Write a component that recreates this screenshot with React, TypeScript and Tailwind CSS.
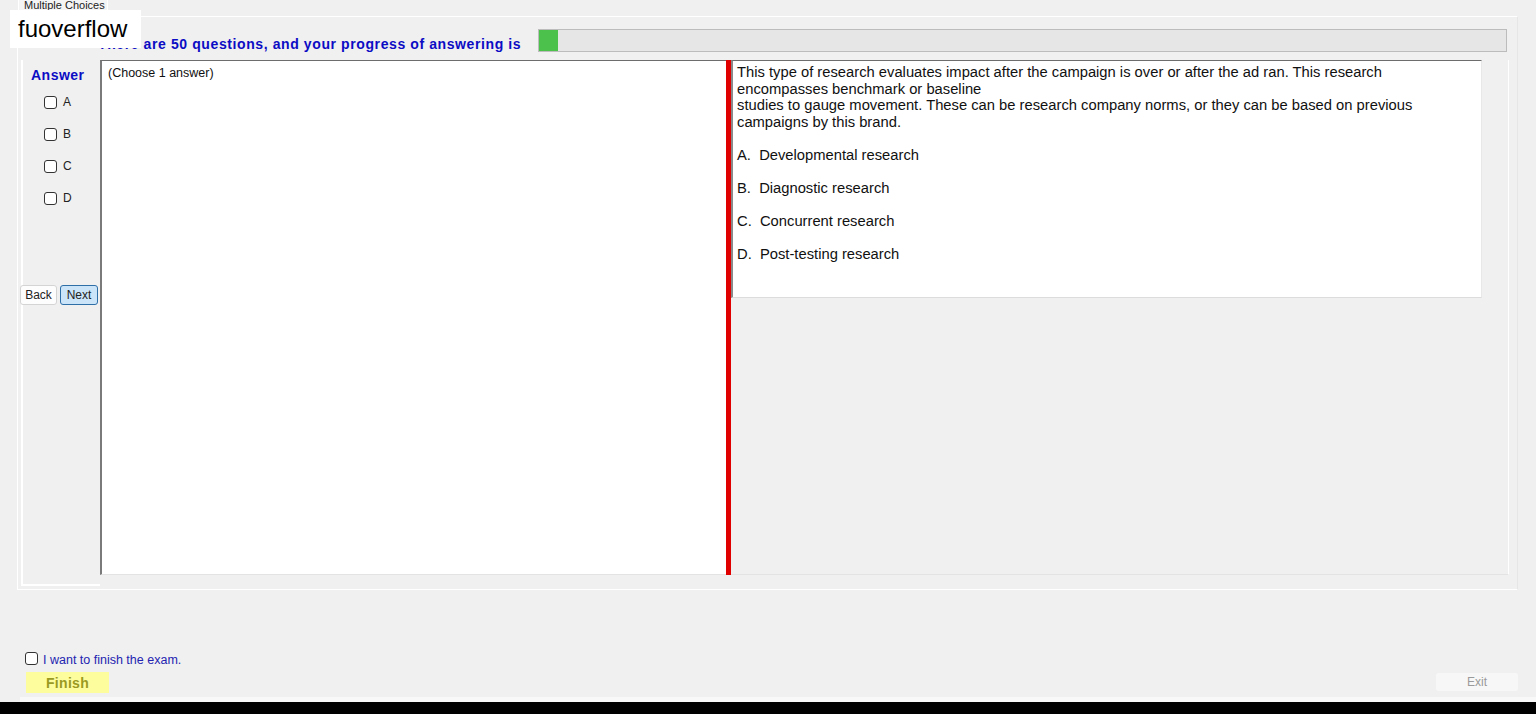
import React from "react";

const Box = () => (
  <div className="w-[13px] h-[13px] bg-white border border-[#333333] rounded-[3px] shrink-0" />
);

export default function App() {
  const choices = ["A", "B", "C", "D"];
  const answers = ["A.  Developmental research", "B.  Diagnostic research", "C.  Concurrent research", "D.  Post-testing research"];
  return (
    <div
      className="relative w-[1536px] h-[714px] overflow-hidden bg-[#f0f0f0] flex flex-col text-black"
      style={{ fontFamily: '"Liberation Sans", Arial, sans-serif' }}
    >
      {/* tab header */}
      <div className="h-[16px] flex pl-[18px] shrink-0">
        <div className="w-[90px] h-[17px] bg-[#f4f4f4] border-x border-white flex items-start pl-[5px] text-[11px] leading-[13px] text-[#222] -mt-[1px]">
          Multiple Choices
        </div>
      </div>

      {/* tab page */}
      <div className="ml-[17px] mr-[18px] h-[574px] shrink-0 border border-white border-r-[#e6e6e6] flex flex-col">
        {/* title row */}
        <div className="mt-[12px] h-[23px] flex shrink-0">
          <div className="w-[520px] pl-[80px] pt-[7px] text-[14px] leading-[16px] font-bold tracking-[0.6px] text-[#0c0cc4] whitespace-nowrap">
            There are 50 questions, and your progress of answering is
          </div>
          <div className="w-[969px] h-[23px] border border-[#bcbcbc] bg-[#e6e6e6] flex">
            <div className="w-[19px] h-full bg-[#4cc24c]" />
          </div>
        </div>

        {/* main row */}
        <div className="mt-[8px] flex h-[526px]">
          {/* left column */}
          <div className="w-[79px] shrink-0 flex flex-col border-l-2 border-b-2 border-white ml-[3px] h-[526px]">
            <div className="pl-[8px] pt-[7px] text-[14px] leading-[16px] font-bold tracking-[0.5px] text-[#0c0cc4]">
              Answer
            </div>
            <div className="mt-[3px] flex flex-col">
              {choices.map((c) => (
                <div key={c} className="h-[32px] flex items-center gap-[6px] pl-[21px]">
                  <Box />
                  <span className="text-[12px] leading-[14px] text-[#222]">{c}</span>
                </div>
              ))}
            </div>
            <div className="mt-[71px] flex gap-[3px] -ml-[3px]">
              <div className="w-[37px] h-[20px] bg-[#fdfdfd] border border-[#d4d4d4] rounded-[3px] flex items-center justify-center text-[12px] text-[#222]">
                Back
              </div>
              <div className="w-[38px] h-[20px] bg-[#cce4f7] border border-[#2f6fa8] rounded-[3px] flex items-center justify-center text-[12px] text-[#222]">
                Next
              </div>
            </div>
          </div>

          {/* left textbox */}
          <div className="w-[626px] h-[515px] shrink-0 bg-white border-t border-t-[#6d6d6d] border-l-2 border-l-[#7a7a7a] border-b border-b-[#e3e3e3]">
            <div className="pl-[6px] pt-[5px] text-[12.5px] leading-[15px] text-[#111]">(Choose 1 answer)</div>
          </div>

          {/* red splitter */}
          <div className="w-[5px] h-[515px] bg-[#e00000] shrink-0" />

          {/* right pane */}
          <div className="w-[778px] h-[515px] shrink-0 flex border-b border-[#e3e3e3] border-r border-r-white">
            <div className="w-[751px] h-[238px] bg-white border-t border-t-[#6d6d6d] border-l-2 border-l-[#8a8a8a] border-b border-b-[#dcdcdc] border-r border-r-[#e8e8e8] pl-[4px] pt-[3px] text-[14.75px] leading-[16.5px] text-[#111] whitespace-pre">
              <div>This type of research evaluates impact after the campaign is over or after the ad ran. This research</div>
              <div>encompasses benchmark or baseline</div>
              <div>studies to gauge movement. These can be research company norms, or they can be based on previous</div>
              <div>campaigns by this brand.</div>
              {answers.map((a) => (
                <React.Fragment key={a}>
                  <div className="h-[16.5px]" />
                  <div>{a}</div>
                </React.Fragment>
              ))}
            </div>
          </div>
        </div>
      </div>

      {/* bottom area */}
      <div className="mt-[62px] h-[13px] flex items-center pl-[25px] gap-[5px] shrink-0">
        <Box />
        <span className="text-[12.5px] leading-[14px] text-[#2424b0] mt-[3px]">I want to finish the exam.</span>
      </div>
      <div className="mt-[7px] h-[21px] flex justify-between items-start shrink-0">
        <div className="ml-[26px] w-[83px] h-[21px] bg-[#fdfd9e] flex items-center justify-center pt-[1px] text-[14px] font-bold tracking-[0.3px] text-[#9a9a22]">
          Finish
        </div>
        <div className="mr-[17px] w-[84px] h-[20px] bg-[#f7f7f7] border border-[#f0f0f0] rounded-[3px] flex items-center justify-center text-[12px] text-[#9a9a9a]">
          Exit
        </div>
      </div>
      <div className="mt-[4px] h-[5px] ml-[20px] bg-[#f8f8f8] shrink-0" />
      <div className="h-[12px] bg-black shrink-0" />

      {/* watermark */}
      <div className="absolute left-[10px] top-[10px] w-[131px] h-[38px] bg-white flex items-center pl-[8px] text-[24px] leading-[28px] text-black">
        fuoverflow
      </div>
    </div>
  );
}
